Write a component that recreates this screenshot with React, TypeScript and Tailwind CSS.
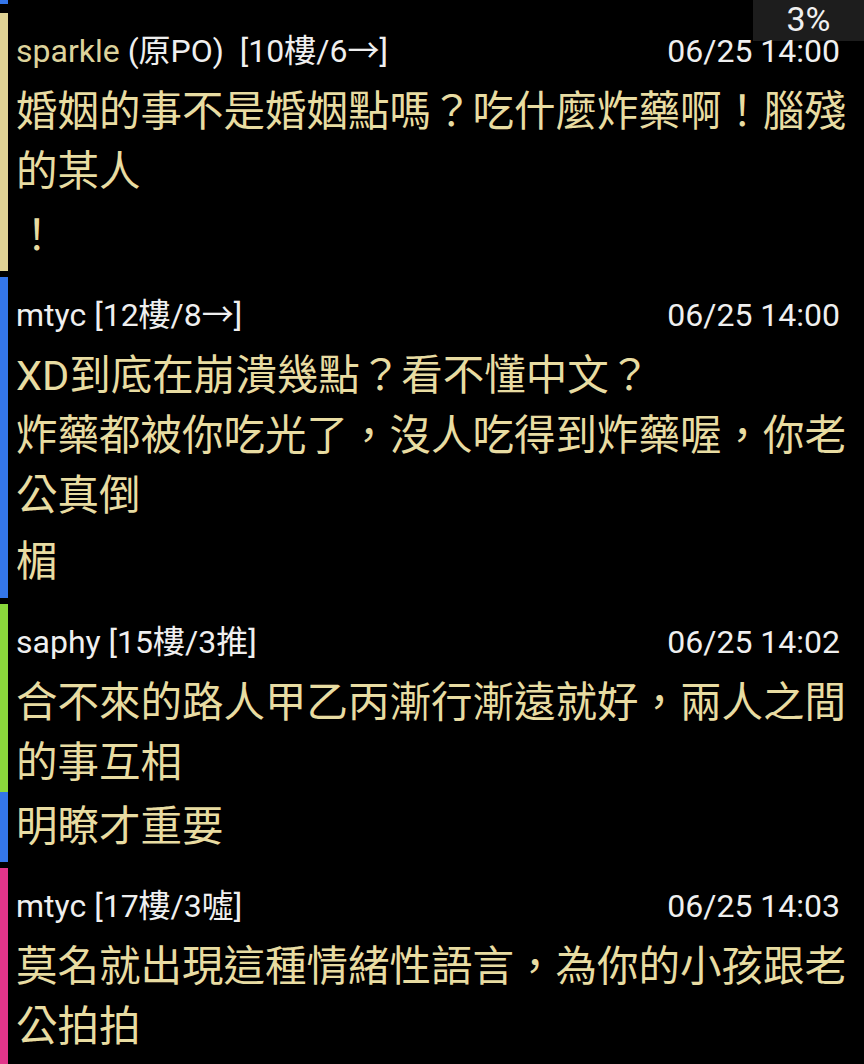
const FONT = "font-['Roboto','Noto_Sans_CJK_TC',sans-serif]"

type Line = { text: string; gap?: string }
type Bar = { cls: string }
type Post = {
  user: string
  op?: boolean
  tag: string
  time: string
  bars: Bar[]
  lines: Line[]
  pad: string
}

const posts: Post[] = [
  {
    user: 'sparkle',
    op: true,
    tag: '[10樓/6→]',
    time: '06/25 14:00',
    bars: [{ cls: 'flex-1 bg-[#dfd294]' }],
    lines: [
      { text: '婚姻的事不是婚姻點嗎？吃什麼炸藥啊！腦殘' },
      { text: '的某人' },
      { text: '！', gap: 'mt-[4px]' },
    ],
    pad: 'pb-[5px]',
  },
  {
    user: 'mtyc',
    tag: '[12樓/8→]',
    time: '06/25 14:00',
    bars: [{ cls: 'flex-1 bg-[#3476ea]' }],
    lines: [
      { text: 'XD到底在崩潰幾點？看不懂中文？' },
      { text: '炸藥都被你吃光了，沒人吃得到炸藥喔，你老' },
      { text: '公真倒' },
      { text: '楣', gap: 'mt-[6px]' },
    ],
    pad: 'pb-[6px]',
  },
  {
    user: 'saphy',
    tag: '[15樓/3推]',
    time: '06/25 14:02',
    bars: [{ cls: 'h-[188px] bg-[#8bd83c]' }, { cls: 'flex-1 bg-[#3476ea]' }],
    lines: [
      { text: '合不來的路人甲乙丙漸行漸遠就好，兩人之間' },
      { text: '的事互相' },
      { text: '明瞭才重要', gap: 'mt-[4px]' },
    ],
    pad: 'pb-[5px]',
  },
  {
    user: 'mtyc',
    tag: '[17樓/3噓]',
    time: '06/25 14:03',
    bars: [{ cls: 'flex-1 bg-[#e2358a]' }],
    lines: [
      { text: '莫名就出現這種情緒性語言，為你的小孩跟老' },
      { text: '公拍拍' },
    ],
    pad: 'pb-[5px]',
  },
]

function PostRow({ post, last }: { post: Post; last: boolean }) {
  return (
    <div className={`flex ${last ? 'flex-1' : ''}`}>
      {/* colour strip on the left */}
      <div className="w-2 shrink-0 flex flex-col">
        {post.bars.map((b, i) => (
          <div key={i} className={b.cls} />
        ))}
      </div>
      <div className={`flex-1 min-w-0 pl-[8px] pr-[24px] pt-[18px] ${post.pad}`}>
        <div className="h-10 flex items-center justify-between text-[32px] leading-10 text-[#efefef] whitespace-pre">
          <span>
            {post.op ? (
              <>
                <span className="text-[#ddd39c]">{post.user}</span> (原PO)  {post.tag}
              </>
            ) : (
              <>
                {post.user} {post.tag}
              </>
            )}
          </span>
          <span>{post.time}</span>
        </div>
        <div className="mt-[11px] text-[41.5px] text-[#e8dca2]">
          {post.lines.map((l, i) => (
            <div key={i} className={`h-[60px] leading-[60px] whitespace-nowrap ${l.gap ?? ''}`}>
              {l.text}
            </div>
          ))}
        </div>
      </div>
    </div>
  )
}

export default function App() {
  return (
    <div className={`relative w-[864px] h-[1064px] overflow-hidden bg-black ${FONT}`}>
      {/* read-progress badge */}
      <div className="absolute top-0 right-0 w-[111px] h-[41px] pb-[3px] bg-[#1d1d1d] flex items-center justify-center text-[34px] leading-none text-[#f0f0f0]">
        3%
      </div>

      <div className="relative h-full flex flex-col gap-[6px]">
        {/* tail of the previous post */}
        <div className="w-2 h-[4px] mb-[3px] bg-[#3476ea]" />
        {posts.map((p, i) => (
          <PostRow key={i} post={p} last={i === posts.length - 1} />
        ))}
      </div>
    </div>
  )
}
